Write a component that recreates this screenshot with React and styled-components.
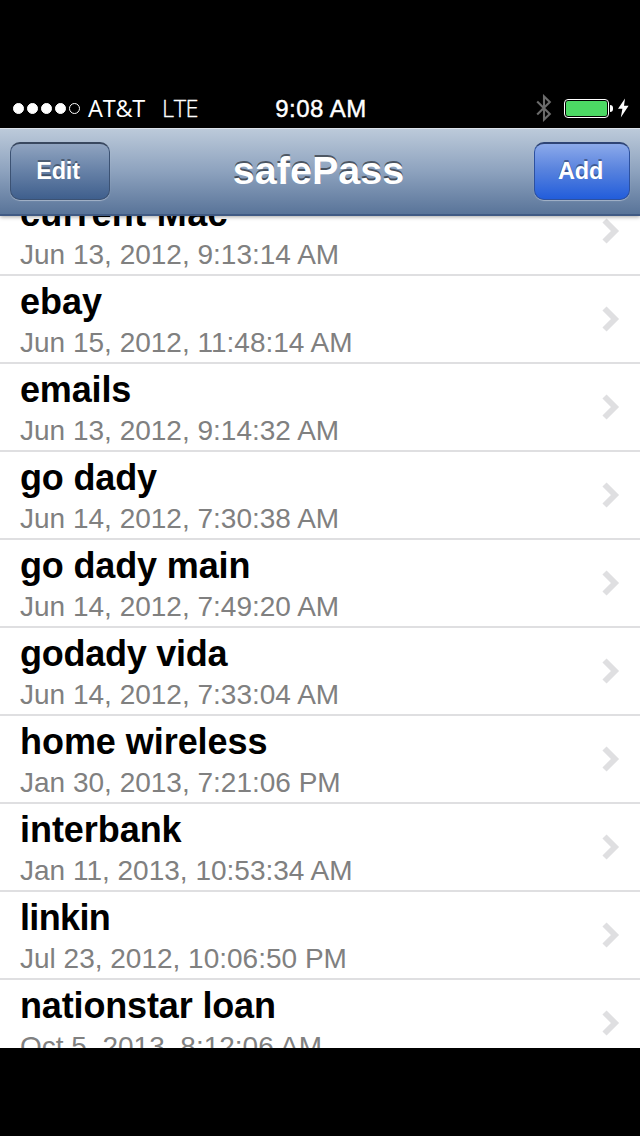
import styled, { createGlobalStyle } from "styled-components";

const accounts = [
  { name: "current Mac", date: "Jun 13, 2012, 9:13:14 AM", tracking: 0.35 },
  { name: "ebay", date: "Jun 15, 2012, 11:48:14 AM", tracking: 0 },
  { name: "emails", date: "Jun 13, 2012, 9:14:32 AM" },
  { name: "go dady", date: "Jun 14, 2012, 7:30:38 AM" },
  { name: "go dady main", date: "Jun 14, 2012, 7:49:20 AM" },
  { name: "godady vida", date: "Jun 14, 2012, 7:33:04 AM", tracking: -0.25 },
  { name: "home wireless", date: "Jan 30, 2013, 7:21:06 PM", tracking: -0.05 },
  { name: "interbank", date: "Jan 11, 2013, 10:53:34 AM", tracking: -0.05 },
  { name: "linkin", date: "Jul 23, 2012, 10:06:50 PM", tracking: -0.65 },
  { name: "nationstar loan", date: "Oct 5, 2013, 8:12:06 AM" },
];

const StatusBar = () => {
  return (
    <StatusBox>
      <CarrierBox>
        <SignalBox>
          <SignalDot $filled />
          <SignalDot $filled />
          <SignalDot $filled />
          <SignalDot $filled />
          <SignalDot />
        </SignalBox>
        <CarrierText>AT&amp;T</CarrierText>
        <NetworkText>LTE</NetworkText>
      </CarrierBox>
      <TimeText>9:08 AM</TimeText>
      <PowerBox>
        <svg width="16" height="28" viewBox="0 0 16 28">
          <path
            d="M1.2 7.5 L13.8 20 L8 25.6 V2.4 L13.8 8 L1.2 20.5"
            fill="none"
            stroke="#6b6b6b"
            strokeWidth="2.1"
          />
        </svg>
        <BatteryBox>
          <BatteryBody>
            <BatteryLevel />
          </BatteryBody>
          <BatteryTip />
        </BatteryBox>
        <BoltIcon width="11" height="20" viewBox="0 0 11 20">
          <path d="M7 0.4 L0 10.8 H4.4 L2.8 19.4 L10.6 7.8 H6 Z" fill="#fff" />
        </BoltIcon>
      </PowerBox>
    </StatusBox>
  );
};

const AccountRow = ({ name, date, tracking = -0.15 }) => {
  return (
    <RowBox>
      <RowTextBox>
        <RowName $tracking={tracking}>{name}</RowName>
        <RowDate>{date}</RowDate>
      </RowTextBox>
      <svg width="18" height="28" viewBox="0 0 18 28">
        <path
          d="M2.5 3.5 L13 14 L2.5 24.5"
          fill="none"
          stroke="#dfdfe1"
          strokeWidth="5.8"
        />
      </svg>
    </RowBox>
  );
};

const App = () => {
  return (
    <ScreenBox>
      <GlobalStyle />
      <StatusBar />
      <NavBar>
        <NavButton $width={100}>Edit</NavButton>
        <NavTitle>safePass</NavTitle>
        <NavButton $width={96} $primary>
          Add
        </NavButton>
      </NavBar>
      <ListBox>
        <ListInnerBox>
          {accounts.map((account) => (
            <AccountRow
              key={account.name}
              name={account.name}
              date={account.date}
              tracking={account.tracking}
            />
          ))}
        </ListInnerBox>
      </ListBox>
    </ScreenBox>
  );
};

export default App;

const GlobalStyle = createGlobalStyle`
  * {
    box-sizing: border-box;
  }
  body {
    margin: 0;
    background-color: #000;
    font-family: "Liberation Sans", Arial, sans-serif;
  }
`;

const ScreenBox = styled.div`
  display: flex;
  flex-direction: column;
  width: 640px;
  height: 1136px;
  padding: 88px 0;
  overflow: hidden;
  background-color: #000;
`;

const StatusBox = styled.div`
  display: grid;
  grid-template-columns: 1fr auto 1fr;
  align-items: center;
  flex: none;
  height: 40px;
  padding: 0 11px 0 13px;
  color: #fff;
  font-size: 24px;
  line-height: 40px;
  white-space: nowrap;
`;

const CarrierBox = styled.div`
  display: flex;
  align-items: center;
  font-family: "Open Sans", "Noto Sans", sans-serif;
  font-size: 23.5px;
  letter-spacing: -0.2px;
`;

const SignalBox = styled.div`
  display: flex;
  gap: 3px;
  margin-right: 8px;
`;

const SignalDot = styled.span`
  width: 11px;
  height: 11px;
  border: 1px solid #fff;
  border-radius: 50%;
  background-color: ${({ $filled }) => ($filled ? "#fff" : "transparent")};
`;

const CarrierText = styled.span`
  margin-right: 17px;
`;

const NetworkText = styled.span`
  font-weight: 300;
  letter-spacing: -0.5px;
  -webkit-text-stroke: 0.3px #fff;
`;

const TimeText = styled.span`
  padding-top: 2px;
  line-height: 38px;
  letter-spacing: 0.5px;
  -webkit-text-stroke: 0.4px #fff;
`;

const PowerBox = styled.div`
  display: flex;
  align-items: center;
  justify-content: flex-end;
`;

const BatteryBox = styled.div`
  display: flex;
  align-items: center;
  gap: 1px;
  margin: 0 5px 0 12px;
`;

const BatteryBody = styled.div`
  display: flex;
  width: 45px;
  height: 19px;
  padding: 1px;
  border: 1px solid #fff;
  border-radius: 4px;
`;

const BatteryLevel = styled.div`
  flex: 1;
  border-radius: 2px;
  background-color: #4cd964;
`;

const BatteryTip = styled.div`
  width: 3px;
  height: 7px;
  border-radius: 0 3px 3px 0;
  background-color: #fff;
`;

const BoltIcon = styled.svg`
  flex: none;
`;

const NavBar = styled.div`
  display: flex;
  align-items: center;
  justify-content: space-between;
  flex: none;
  z-index: 1;
  height: 88px;
  padding: 0 10px 1px;
  border-top: 1px solid #dce2ea;
  border-bottom: 2px solid #405a84;
  background: linear-gradient(#bccada, #8da2be 50%, #597499);
  box-shadow: 0 1px 4px rgba(0, 0, 0, 0.35);
`;

const NavTitle = styled.h1`
  margin: 0 7px 3px 0;
  color: #fff;
  font-size: 39.5px;
  font-weight: bold;
  line-height: 46px;
  text-shadow: 0 -2px 0 rgba(0, 0, 0, 0.5);
`;

const NavButton = styled.button`
  width: ${({ $width }) => $width}px;
  height: 58px;
  padding: 0 ${({ $primary }) => ($primary ? 3 : 4)}px 1px 0;
  border: 1px solid ${({ $primary }) => ($primary ? "#2d51a0" : "#3c5273")};
  border-top: 2px solid ${({ $primary }) => ($primary ? "#2f4576" : "#39485f")};
  border-radius: 10px;
  background: ${({ $primary }) =>
    $primary
      ? "linear-gradient(#8caaeb, #5a84de 45%, #225ddb)"
      : "linear-gradient(#90a4c0, #6a84a9 45%, #3f5f8d)"};
  box-shadow: 0 1px 1px rgba(255, 255, 255, 0.4);
  color: #fff;
  font-family: inherit;
  font-size: 23.5px;
  font-weight: bold;
  letter-spacing: -0.2px;
  text-shadow: 0 -2px 0 rgba(0, 0, 0, 0.35);
`;

const ListBox = styled.div`
  flex: none;
  height: 832px;
  overflow: hidden;
  background-color: #fff;
`;

/* list is scrolled part way into its first row */
const ListInnerBox = styled.div`
  margin-top: -28px;
`;

const RowBox = styled.div`
  display: flex;
  align-items: center;
  justify-content: space-between;
  height: 88px;
  padding: 0 20px;
  border-bottom: 2px solid #dfdfe1;
`;

const RowTextBox = styled.div`
  padding-top: 3px;
  white-space: nowrap;
`;

const RowName = styled.div`
  margin-bottom: 2px;
  color: #000;
  font-size: 36px;
  font-weight: bold;
  letter-spacing: ${({ $tracking }) => $tracking}px;
  line-height: 42px;
`;

const RowDate = styled.div`
  color: #808080;
  font-size: 28px;
  line-height: 36px;
`;
